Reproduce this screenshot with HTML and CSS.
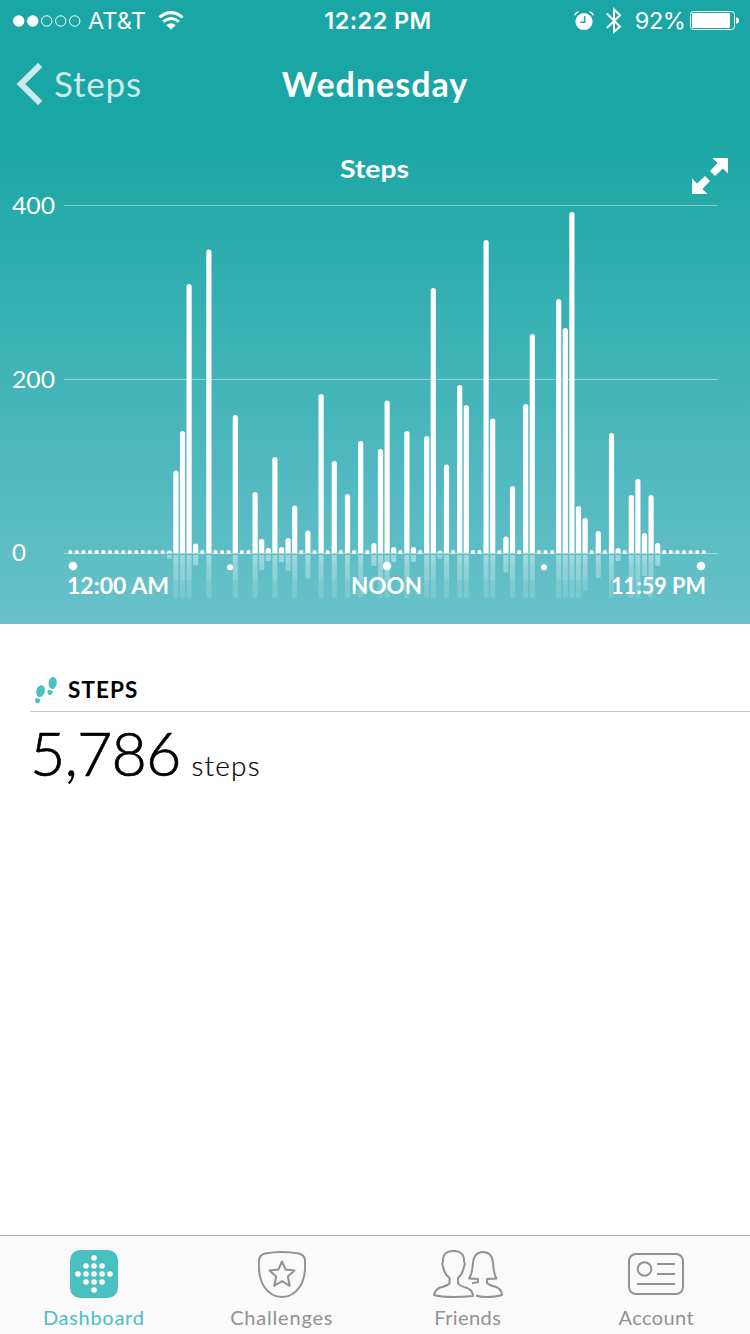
FILE: index.html
```html
<!DOCTYPE html>
<html lang="en">
<head>
<meta charset="utf-8">
<title>Steps</title>
<link rel="stylesheet" href="styles.css">
</head>
<body>
<div class="app">
  <section class="hero">
    <header class="status">
      <div class="status-left">
        <svg class="signal" width="69" height="14" viewBox="0 0 69 14"><g fill="#fff"><circle cx="5.7" cy="7" r="5.7"/><circle cx="19.7" cy="7" r="5.7"/></g><g fill="none" stroke="#fff"><circle cx="33.7" cy="7" r="5.2"/><circle cx="47.7" cy="7" r="5.2"/><circle cx="61.7" cy="7" r="5.2"/></g></svg>
        <span class="carrier">AT&amp;T</span>
        <svg class="wifi" width="26" height="19" viewBox="0 0 26 19"><g fill="none" stroke="#fff" stroke-width="3"><path d="M1.4 6.4Q13-3.2 24.6 6.4"/><path d="M5.2 10.7Q13 4.2 20.8 10.7"/></g><path fill="#fff" d="M8.3 14Q13 10.5 17.7 14L13 18.5z"/></svg>
      </div>
      <span class="clock">12:22 PM</span>
      <div class="status-right">
        <svg class="alarm" width="20" height="20" viewBox="0 0 20 20"><circle cx="10" cy="10.5" r="8.6" fill="#fff"/><path d="M.8 4.3Q1.5 1.5 4.6.9M19.2 4.3Q18.5 1.5 15.4.9" fill="none" stroke="#fff" stroke-width="1.4"/><path d="M10.8 5v6.2H6.4" fill="none" stroke="#19a6a4" stroke-width="1.4"/></svg>
        <svg class="bluetooth" width="16" height="28" viewBox="0 0 16 28"><path d="M.8 6.5L14 19.600l-6 5.300V2.400l6 5.800L.8 21" fill="none" stroke="#fff" stroke-width="2"/></svg>
        <span class="percent">92%</span>
        <svg class="battery" width="50" height="20" viewBox="0 0 50 20"><rect x=".5" y=".5" width="44" height="18" rx="3" fill="none" stroke="#fff"/><rect x="2" y="2" width="38" height="15" rx="1" fill="#fff"/><path d="M46 6.2q3 .5 3 3.3t-3 3.3z" fill="#fff"/></svg>
      </div>
    </header>
    <nav class="nav">
      <a class="back"><svg width="27" height="42" viewBox="0 0 27 42"><path d="M24.200 2L4.800 21l19.400 19" fill="none" stroke="#cbeae9" stroke-width="6"/></svg><span class="back-label">Steps</span></a>
      <h1 class="title">Wednesday</h1>
      <span></span>
    </nav>
    <svg class="chart" width="750" height="494" viewBox="0 130 750 494">
      <defs>
        <linearGradient id="reflection" gradientUnits="userSpaceOnUse" x1="0" y1="555" x2="0" y2="598">
          <stop offset="0" stop-color="#fff" stop-opacity=".4"/>
          <stop offset=".17" stop-color="#fff" stop-opacity=".39"/>
          <stop offset=".18" stop-color="#fff" stop-opacity=".33"/>
          <stop offset=".57" stop-color="#fff" stop-opacity=".27"/>
          <stop offset=".58" stop-color="#fff" stop-opacity=".18"/>
          <stop offset="1" stop-color="#fff" stop-opacity=".13"/>
        </linearGradient>
      </defs>
      <text class="chart-title" x="340" y="178" textLength="69" lengthAdjust="spacingAndGlyphs">Steps</text>
      <g fill="#fff"><path d="M712.5 158H728v15.5l-5-5-8 7.6-5-5 7.6-8z"/><path d="M707.5 194H692v-15.5l5 5 8-7.6 5 5-7.6 8z"/></g>
      <path class="gridline" d="M64 205.5h654M64 379.5h654M64 553.5h654"/>
      <g class="y-labels">
        <text x="12" y="213.500" textLength="43" lengthAdjust="spacingAndGlyphs">400</text>
        <text x="12" y="387.500" textLength="43" lengthAdjust="spacingAndGlyphs">200</text>
        <text x="12" y="560.500" textLength="14" lengthAdjust="spacingAndGlyphs">0</text>
      </g>
      <g id="bars"></g>
      <g fill="#fff"><circle cx="73" cy="566" r="4.3"/><circle cx="387" cy="566" r="4.3"/><circle cx="701" cy="566" r="4.3"/><circle cx="230" cy="567.3" r="3"/><circle cx="544" cy="567.3" r="3"/></g>
      <g class="x-labels">
        <text x="67" y="594" textLength="102" lengthAdjust="spacingAndGlyphs">12:00 AM</text>
        <text x="351" y="594" textLength="71" lengthAdjust="spacingAndGlyphs">NOON</text>
        <text x="611" y="594" textLength="95" lengthAdjust="spacingAndGlyphs">11:59 PM</text>
      </g>
    </svg>
  </section>

  <main class="summary">
    <div class="summary-head">
      <svg width="24" height="28" viewBox="0 0 24 28" fill="#4ac0c1"><ellipse cx="6.6" cy="15.2" rx="4.2" ry="6" transform="rotate(16 6.6 15.2)"/><path d="M1.2 22.5Q4 21.7 6.3 23.2 6 27.5 3.3 27.3.9 27 1.2 22.5z"/><ellipse cx="18.7" cy="7" rx="4.1" ry="6.1" transform="rotate(8 18.7 7)"/><path d="M13.7 14q2.700-.4 5.200 1.200-.7 4-3.300 3.800-2.600-.4-1.900-5z"/></svg>
      <h2 class="summary-title">STEPS</h2>
    </div>
    <p class="total"><span class="total-value">5,786</span><span class="total-unit">steps</span></p>
  </main>

  <footer class="tabs">
    <a class="tab tab-active">
      <svg width="48" height="50" viewBox="0 0 48 50"><rect y="1" width="48" height="48" rx="10" fill="#4ac0c1"/><g fill="#fff"><circle cx="24" cy="9" r="2.8"/><circle cx="16" cy="17" r="2.8"/><circle cx="24" cy="17" r="2.8"/><circle cx="32" cy="17" r="2.8"/><circle cx="8" cy="25" r="2.8"/><circle cx="16" cy="25" r="2.8"/><circle cx="24" cy="25" r="2.8"/><circle cx="32" cy="25" r="2.8"/><circle cx="40" cy="25" r="2.8"/><circle cx="16" cy="33" r="2.8"/><circle cx="24" cy="33" r="2.8"/><circle cx="32" cy="33" r="2.8"/><circle cx="24" cy="41" r="2.8"/></g></svg>
      <span class="tab-label dashboard">Dashboard</span>
    </a>
    <a class="tab">
      <svg class="line-icon shield-icon" width="48" height="50" viewBox="1 0 48 50"><path d="M8 4.500Q25 1.500 42 4.500 48 6 48 12 49 28 43 37.500 36 48 25 48T7 37.500Q1 28 2 12 2 6 8 4.500z"/><path d="M25 12.500l3.600 8 8.900 1-6.700 6 2 9.300-7.800-4.700-7.800 4.700 2-9.300-6.700-6 8.900-1z"/></svg>
      <span class="tab-label challenges">Challenges</span>
    </a>
    <a class="tab">
      <svg class="line-icon friends-icon" width="70" height="50" viewBox="0 0 70 50"><path d="M16.500 34.500V29Q11.500 25.500 10 17.500 8.500 15 10 12.500 9.500 2 20.500 2T31 12.500Q32.500 15 31 17.500 29.500 25.500 25 29v5.500Q27 37 34 39 39.500 41 40 47 30 48 20.500 48 8 48 1 46 2 41 7 38.500 14 37 16.500 34.500z"/><path d="M39 34.200L45 33v-3L36 29.500Q39 26 40 14 41 3 50 3T60 14Q61 26 63.500 29.500L54 30v4Q56 36 63 38 68.500 40 69 46 63 48 53 48 47 48 43 46.500"/></svg>
      <span class="tab-label friends">Friends</span>
    </a>
    <a class="tab">
      <svg class="line-icon" width="56" height="50" viewBox="0 0 56 50"><rect x="1" y="5" width="54" height="40" rx="7"/><circle cx="16.500" cy="20" r="6.800"/><path d="M29 15h18M29 25h18M9 35h38"/></svg>
      <span class="tab-label account">Account</span>
    </a>
  </footer>
</div>
<script src="chart.js"></script>
</body>
</html>
```

FILE: styles.css
```css
* { box-sizing: border-box; }
body { margin: 0; font-family: Lato, "Open Sans", sans-serif; color: #000; background: #fff; }
h1, h2, p { margin: 0; font-weight: normal; }
svg { display: block; flex: none; }
.app { width: 750px; height: 1334px; display: flex; flex-direction: column; }
.hero { height: 624px; flex: none; color: #fff; background: linear-gradient(#19a6a4 125px, #69c1cb 624px); display: flex; flex-direction: column; }

.status { height: 41px; flex: none; display: grid; grid-template-columns: 1fr auto 1fr; align-items: center; padding: 0 10px 0 13px; font-family: Inter, sans-serif; font-size: 23.5px; line-height: 41px; white-space: nowrap; }
.status-left, .status-right { display: flex; align-items: center; }
.status-right { justify-content: flex-end; }
.carrier { margin-left: 6px; letter-spacing: .1px; }
.wifi { margin-left: 12px; }
.clock { font-weight: 600; letter-spacing: .4px; margin-left: 3px; }
.bluetooth { margin-left: 12px; }
.percent { margin-left: 13px; letter-spacing: -.4px; }
.battery { margin-left: 4.500px; }

.nav { height: 89px; flex: none; display: grid; grid-template-columns: 1fr auto 1fr; padding: 0 16px; line-height: 86px; }
.back { display: flex; align-items: center; padding-bottom: 3px; }
.back-label { margin-left: 11px; margin-top: -2px; color: #cbeae9; font-size: 35px; letter-spacing: .8px; }
.title { font-size: 34px; font-weight: 700; letter-spacing: 1px; }

.chart { font-family: Lato, sans-serif; }
.chart text { fill: #fff; }
.chart-title { font-size: 25.500px; font-weight: 700; }
.gridline { stroke: #fff; stroke-opacity: .42; fill: none; }
.y-labels { font-size: 23px; }
.x-labels { font-size: 22.500px; font-weight: 700; }
.bar { fill: #fff; }
.mirror { fill: url(#reflection); }

.summary { flex: 1; padding: 52px 0 0 30px; }
.summary-head { height: 36px; display: flex; border-bottom: 1px solid #c8c8c8; padding-left: 4px; }
.summary-title { margin-left: 10px; font-size: 22.500px; font-weight: 700; line-height: 28px; letter-spacing: 1.100px; }
.total { display: flex; align-items: baseline; line-height: 82px; }
.total-value { font-size: 61px; font-weight: 300; letter-spacing: -.900px; -webkit-text-stroke: .7px #000; }
.total-unit { margin-left: 11px; font-size: 28px; font-weight: 300; letter-spacing: 1.200px; -webkit-text-stroke: .2px #000; }

.tabs { height: 99px; flex: none; border-top: 1px solid #b2b2b2; background: #fafafa; display: grid; grid-template-columns: repeat(4, 1fr); color: #929292; }
.tab { display: flex; flex-direction: column; align-items: center; padding-top: 13px; }
.tab-active { color: #4ac0c1; }
.tab-label { font-size: 20px; line-height: 36px; letter-spacing: .4px; }
.dashboard { letter-spacing: .7px; }
.challenges { letter-spacing: .8px; margin-left: 1px; }
.line-icon { fill: none; stroke: #929292; stroke-width: 2; stroke-linejoin: round; }
.shield-icon { margin-left: 2px; }
.friends-icon { margin-right: 2px; }
.friends { margin-right: 2px; }
```

FILE: chart.js
```js
// Top edge of each bar by quarter-hour slot; slots not listed are idle dots.
const tops = {
  15: 550.500, 16: 470.500, 17: 431, 18: 284, 19: 543.500, 21: 249.500, 25: 415, 28: 492, 29: 539, 30: 548,
  31: 457, 32: 547, 33: 538, 34: 505.500, 36: 530.500, 38: 394, 40: 461, 42: 494, 44: 441,
  46: 543, 47: 449, 48: 400.500, 49: 547, 51: 431, 52: 547, 54: 436, 55: 288, 56: 550.500,
  57: 464.500, 59: 385, 60: 405, 63: 240, 64: 418.500, 66: 536.500, 67: 486, 69: 404, 70: 334,
  74: 299, 75: 328, 76: 212, 77: 506, 78: 518, 80: 531, 82: 433, 83: 548, 85: 495,
  86: 479, 87: 533, 88: 495, 89: 543
};
const baseline = 553;
let shapes = "";
for (let i = 0; i < 97; i++) {
  const x = 70.300 + i * 6.600;
  const top = tops[i];
  if (top === undefined) {
    shapes += `<circle class="bar" cx="${x}" cy="552" r="2.100"/>`;
    continue;
  }
  const r = Math.min(2.600, baseline - top);
  shapes += `<path class="bar" d="M${x - 2.600} ${baseline}V${top + r}a2.600 ${r} 0 0 1 5.200 0V${baseline}z"/>`;
  const depth = Math.min(43, baseline - top + 1);
  shapes += `<path class="mirror" d="M${x - 2.500} 555h5v${depth - 1}q0 1-1 1h-3q-1 0-1-1z"/>`;
}
document.getElementById("bars").innerHTML = shapes;
```
